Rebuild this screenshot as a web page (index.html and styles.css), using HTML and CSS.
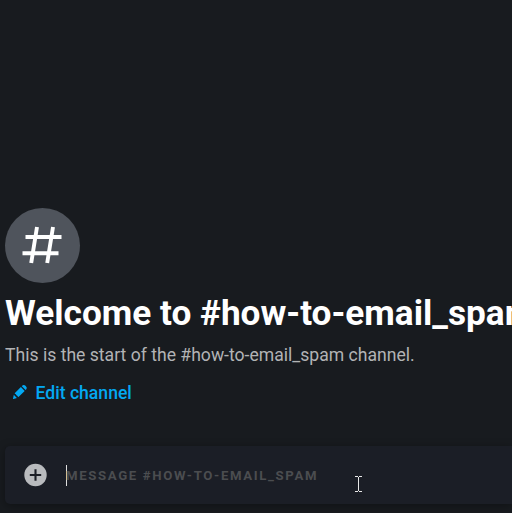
FILE: index.html
```html
<!DOCTYPE html>
<html lang="en"><head><meta charset="utf-8"><title>how-to-email_spam</title><link rel="stylesheet" href="styles.css"></head>
<body>
<main class="chat">
<section class="welcome">
<div class="badge"><svg viewBox="0 0 75 75" width="75" height="75"><path d="M20.500 29H56.500M17.500 45.300H53.500M32 19L26.200 55M48 19L42.200 55" fill="none" stroke="#fff" stroke-width="3.900" stroke-linejoin="round"/></svg></div>
<h1 class="title">Welcome to #how-to-email_spam!</h1>
<p class="description">This is the start of the #how-to-email_spam channel.</p>
<a class="edit"><svg class="pencil" viewBox="0 0 16 16" width="16" height="16"><path d="M1 14.700L1.800 10.800L4.900 13.900L1.500 15Q.9 15.100 1 14.700ZM2.700 9.200L8.900 3.100L12.700 6.900L6.500 13Q5.800 12.900 5.600 12.300Q5.500 11.700 4.400 11.200Q3.900 10.100 3.300 10Q2.800 9.800 2.700 9.200ZM9.800 2.200L10.700 1.300Q12 .4 13.500 1.700Q15.500 3.500 14.500 5.100L13.600 6Z" fill="#03a8f2"/></svg><span>Edit channel</span></a>
</section>
<div class="composer">
<svg class="plus" viewBox="0 0 24 24" width="24" height="24"><circle cx="12.500" cy="12" r="11.200" fill="#b9bbbe"/><path d="M12.500 6.300v11.400M6.800 12h11.400" stroke="#1b1e26" stroke-width="2.100"/></svg>
<div class="input"><span class="placeholder">MESSAGE #HOW-TO-EMAIL_SPAM</span></div>
</div>
</main>
<svg class="pointer" viewBox="0 0 7 16" width="7" height="16"><path d="M0 .5h3M4 .5h3M3.500 1v14M0 15.500h3M4 15.500h3" fill="none" stroke="#e8e8e8"/></svg>
</body></html>
```
FILE: styles.css
```css
* { box-sizing: border-box; }
body { margin: 0; width: 512px; height: 513px; overflow: hidden; background: #181b1f; font-family: Roboto, sans-serif; position: relative; }
.chat { height: 513px; display: flex; flex-direction: column; justify-content: flex-end; padding: 0 0 9px 5px; overflow: hidden; }
.welcome { display: flex; flex-direction: column; align-items: flex-start; margin-bottom: 41px; }
.badge { width: 75px; height: 75px; border-radius: 50%; background: #4f545c; }
.title { margin: 10px 0 0; font-size: 35.200px; line-height: 40px; font-weight: 700; color: #fff; white-space: nowrap; }
.description { margin: 10px 0 0; font-size: 17.600px; line-height: 24px; color: #b2b3b5; white-space: nowrap; }
.edit { display: flex; align-items: center; gap: 7.500px; margin: 14px 0 0 7px; font-size: 17.600px; line-height: 24px; font-weight: 500; color: #03a8f2; }
.pencil { margin-top: -2px; }
.composer { height: 58px; display: flex; align-items: center; padding-left: 18px; background: #1b1e26; border-radius: 5px 0 0 5px; box-shadow: 0 2px 10px rgba(0, 0, 0, .35); }
.input { margin-left: 19px; border-left: 1px solid #ddd; height: 21px; line-height: 21px; }
.placeholder { display: block; font-size: 13.200px; font-weight: 700; letter-spacing: 1.650px; margin-left: -1px; color: #4b4d50; white-space: nowrap; }
.pointer { position: absolute; left: 355px; top: 476px; }
```
